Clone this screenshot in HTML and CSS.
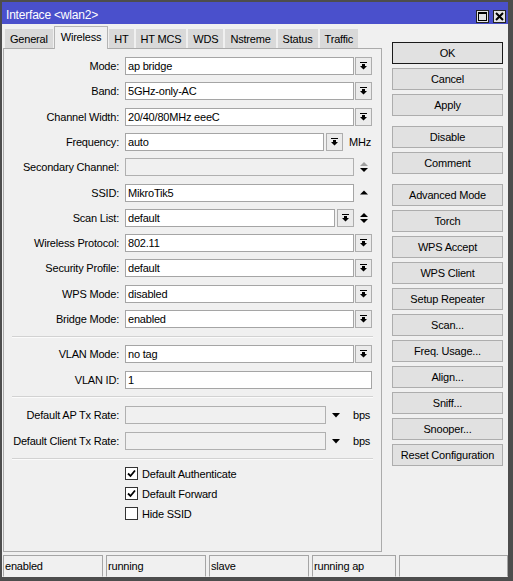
FILE: index.html
```html
<!DOCTYPE html>
<html lang="en">

<head>
    <meta charset="UTF-8">
    <title>Interface &lt;wlan2&gt;</title>
    <link rel="stylesheet" href="styles.css">
</head>

<body>
    <div class="window">
        <div class="titlebar">
            <span class="title">Interface &lt;wlan2&gt;</span>
            <div class="title-btns">
                <span class="tbtn">
                    <svg width="9" height="9" viewBox="0 0 9 9"><path d="M0 0h9v9H0z M1 2v6h7V2z" fill="#000" fill-rule="evenodd"/></svg>
                </span>
                <span class="tbtn">
                    <svg width="9" height="9" viewBox="0 0 9 9"><path d="M1 1l7 7M8 1L1 8" stroke="#000" stroke-width="2"/></svg>
                </span>
            </div>
        </div>

        <div class="main">
            <div class="tabbox">
                <div class="tabs">
                    <span class="tab">General</span>
                    <span class="tab active">Wireless</span>
                    <span class="tab">HT</span>
                    <span class="tab">HT MCS</span>
                    <span class="tab">WDS</span>
                    <span class="tab">Nstreme</span>
                    <span class="tab">Status</span>
                    <span class="tab">Traffic</span>
                </div>
                <div class="panel">
                    <div class="row">
                        <span class="label">Mode:</span>
                        <div class="field"><span class="input">ap bridge</span><span class="drop"><svg width="7" height="8" viewBox="0 0 7 8"><path d="M0 0h7v1H0z M2 2h3v2h2L3.5 7.5 0 4h2z"/></svg></span></div>
                    </div>
                    <div class="row">
                        <span class="label">Band:</span>
                        <div class="field"><span class="input">5GHz-only-AC</span><span class="drop"><svg width="7" height="8" viewBox="0 0 7 8"><path d="M0 0h7v1H0z M2 2h3v2h2L3.5 7.5 0 4h2z"/></svg></span></div>
                    </div>
                    <div class="row">
                        <span class="label">Channel Width:</span>
                        <div class="field"><span class="input">20/40/80MHz eeeC</span><span class="drop"><svg width="7" height="8" viewBox="0 0 7 8"><path d="M0 0h7v1H0z M2 2h3v2h2L3.5 7.5 0 4h2z"/></svg></span></div>
                    </div>
                    <div class="row">
                        <span class="label">Frequency:</span>
                        <div class="field"><span class="input">auto</span><span class="drop gap2"><svg width="7" height="8" viewBox="0 0 7 8"><path d="M0 0h7v1H0z M2 2h3v2h2L3.5 7.5 0 4h2z"/></svg></span><span class="unit">MHz</span></div>
                    </div>
                    <div class="row">
                        <span class="label">Secondary Channel:</span>
                        <div class="field"><span class="input off"></span>
                            <span class="spin"><svg width="8" height="10" viewBox="0 0 8 10"><path d="M0 4L4 0 8 4z" fill="#a0a0a0"/><path d="M0 6h8L4 10z"/></svg></span>
                        </div>
                    </div>
                    <div class="row">
                        <span class="label">SSID:</span>
                        <div class="field"><span class="input">MikroTik5</span>
                            <span class="spin"><svg width="8" height="10" viewBox="0 0 8 10"><path d="M0 6.5L4 2.5 8 6.5z"/></svg></span>
                        </div>
                    </div>
                    <div class="row">
                        <span class="label">Scan List:</span>
                        <div class="field"><span class="input">default</span><span class="drop gap2"><svg width="7" height="8" viewBox="0 0 7 8"><path d="M0 0h7v1H0z M2 2h3v2h2L3.5 7.5 0 4h2z"/></svg></span>
                            <span class="spin"><svg width="8" height="10" viewBox="0 0 8 10"><path d="M0 4L4 0 8 4z"/><path d="M0 6h8L4 10z"/></svg></span>
                        </div>
                    </div>
                    <div class="row">
                        <span class="label">Wireless Protocol:</span>
                        <div class="field"><span class="input">802.11</span><span class="drop"><svg width="7" height="8" viewBox="0 0 7 8"><path d="M0 0h7v1H0z M2 2h3v2h2L3.5 7.5 0 4h2z"/></svg></span></div>
                    </div>
                    <div class="row">
                        <span class="label">Security Profile:</span>
                        <div class="field"><span class="input">default</span><span class="drop"><svg width="7" height="8" viewBox="0 0 7 8"><path d="M0 0h7v1H0z M2 2h3v2h2L3.5 7.5 0 4h2z"/></svg></span></div>
                    </div>
                    <div class="row">
                        <span class="label">WPS Mode:</span>
                        <div class="field"><span class="input">disabled</span><span class="drop"><svg width="7" height="8" viewBox="0 0 7 8"><path d="M0 0h7v1H0z M2 2h3v2h2L3.5 7.5 0 4h2z"/></svg></span></div>
                    </div>
                    <div class="row">
                        <span class="label">Bridge Mode:</span>
                        <div class="field"><span class="input">enabled</span><span class="drop"><svg width="7" height="8" viewBox="0 0 7 8"><path d="M0 0h7v1H0z M2 2h3v2h2L3.5 7.5 0 4h2z"/></svg></span></div>
                    </div>

                    <div class="sep"></div>

                    <div class="row">
                        <span class="label">VLAN Mode:</span>
                        <div class="field"><span class="input">no tag</span><span class="drop"><svg width="7" height="8" viewBox="0 0 7 8"><path d="M0 0h7v1H0z M2 2h3v2h2L3.5 7.5 0 4h2z"/></svg></span></div>
                    </div>
                    <div class="row">
                        <span class="label">VLAN ID:</span>
                        <div class="field"><span class="input">1</span></div>
                    </div>

                    <div class="sep"></div>

                    <div class="row tall">
                        <span class="label">Default AP Tx Rate:</span>
                        <div class="field rate"><span class="input off"></span>
                            <svg class="tri" width="8" height="5" viewBox="0 0 8 5"><path d="M0 0h8L4 4.5z"/></svg>
                            <span class="bps">bps</span>
                        </div>
                    </div>
                    <div class="row tall">
                        <span class="label">Default Client Tx Rate:</span>
                        <div class="field rate"><span class="input off"></span>
                            <svg class="tri" width="8" height="5" viewBox="0 0 8 5"><path d="M0 0h8L4 4.5z"/></svg>
                            <span class="bps">bps</span>
                        </div>
                    </div>

                    <div class="sep tight"></div>

                    <div class="check-row">
                        <span class="box"><svg width="9" height="9" viewBox="0 0 9 9"><path d="M1 4.5l2.5 2.5L8 1.5" fill="none" stroke="#000" stroke-width="1.8"/></svg></span>
                        Default Authenticate
                    </div>
                    <div class="check-row">
                        <span class="box"><svg width="9" height="9" viewBox="0 0 9 9"><path d="M1 4.5l2.5 2.5L8 1.5" fill="none" stroke="#000" stroke-width="1.8"/></svg></span>
                        Default Forward
                    </div>
                    <div class="check-row">
                        <span class="box"></span>
                        Hide SSID
                    </div>
                </div>
            </div>

            <div class="buttons">
                <span class="btn default">OK</span>
                <span class="btn">Cancel</span>
                <span class="btn">Apply</span>
                <span class="btn group">Disable</span>
                <span class="btn">Comment</span>
                <span class="btn group">Advanced Mode</span>
                <span class="btn">Torch</span>
                <span class="btn">WPS Accept</span>
                <span class="btn">WPS Client</span>
                <span class="btn">Setup Repeater</span>
                <span class="btn">Scan...</span>
                <span class="btn">Freq. Usage...</span>
                <span class="btn">Align...</span>
                <span class="btn">Sniff...</span>
                <span class="btn">Snooper...</span>
                <span class="btn">Reset Configuration</span>
            </div>
        </div>

        <div class="status">
            <span class="cell">enabled</span>
            <span class="cell">running</span>
            <span class="cell">slave</span>
            <span class="cell short">running ap</span>
            <span class="cell last"></span>
        </div>
    </div>
</body>

</html>
```

FILE: styles.css
```css
* {
    margin: 0;
    padding: 0;
    box-sizing: border-box;
}

body {
    font: 11px "Liberation Sans", Arial, sans-serif;
    letter-spacing: -0.2px;
    color: #000;
    background-color: #f0f0f0;
}

.window {
    width: 513px;
    height: 581px;
    display: flex;
    flex-direction: column;
    border-style: solid;
    border-color: #4d4d4d;
    border-width: 2px 5px 4px 2px;
    background-color: #f0f0f0;
}

/* title bar */
.titlebar {
    height: 22px;
    flex: none;
    display: flex;
    align-items: center;
    padding-left: 4px;
    background-color: #4a50cc;
    color: #fff;
}

.title {
    font-size: 12px;
    margin-top: 4px;
}

.title-btns {
    margin-left: auto;
    margin-right: 2px;
    margin-top: 6px;
    display: flex;
    gap: 4px;
}

.tbtn {
    width: 13px;
    height: 13px;
    border: 1px solid #222;
    background-color: #e3e3e3;
    display: flex;
    align-items: center;
    justify-content: center;
}

/* main area */
.main {
    flex: 1;
    display: flex;
    padding: 2px 0 3px 1px;
}

.tabbox {
    width: 379px;
    display: flex;
    flex-direction: column;
}

.tabs {
    height: 23px;
    margin-bottom: -1px;
    padding-left: 2px;
    display: flex;
    align-items: flex-start;
    gap: 2px;
}

.tab {
    height: 19px;
    margin-top: 3px;
    padding: 0 5px;
    line-height: 20px;
    background-color: #d9d9d9;
}

.tab.active {
    position: relative;
    z-index: 1;
    height: 23px;
    margin: 0 -1px;
    padding: 0 6px;
    line-height: 20px;
    background-color: #f0f0f0;
    border: 1px solid #b4b4b4;
    border-bottom: none;
}

.panel {
    flex: 1;
    border: 1px solid #ababab;
    padding-top: 4.4px;
    background-color: #f0f0f0;
}

.row {
    height: 25.3px;
    display: flex;
    align-items: center;
}

.row.tall {
    height: 26px;
}

.label {
    width: 115px;
    margin-right: 6px;
    text-align: right;
    white-space: nowrap;
}

.field {
    width: 247px;
    height: 18px;
    display: flex;
    align-items: center;
}

.input {
    flex: 1;
    height: 18px;
    padding: 0 2px;
    line-height: 16px;
    border: 1px solid #a5a5a5;
    background-color: #fff;
    white-space: nowrap;
}

.input.off {
    background-color: #f0f0f0;
    border-color: #b0b0b0;
}

.drop {
    width: 17px;
    height: 18px;
    margin-left: 1px;
    flex: none;
    display: flex;
    align-items: center;
    justify-content: center;
    border: 1px solid #adadad;
    background-color: #ebebeb;
}

.drop.gap2 {
    margin-left: 2px;
}

.unit {
    width: 29px;
    flex: none;
    padding-left: 6px;
}

.spin {
    width: 18px;
    flex: none;
    display: flex;
    justify-content: center;
    padding-left: 2px;
}

.rate .input {
    flex: 0 0 201px;
}

.rate .tri {
    margin-left: 6px;
}

.rate .bps {
    margin-left: 13px;
}

.sep {
    margin: 4px 8px 4px;
    border-top: 1px solid #d2d2d2;
    border-bottom: 1px solid #fbfbfb;
}

.sep.tight {
    margin: 4px 8px 3.6px;
}

.check-row {
    height: 20px;
    display: flex;
    align-items: center;
    padding-left: 121px;
}

.box {
    width: 13px;
    height: 13px;
    margin-right: 4px;
    border: 1px solid #333;
    background-color: #fff;
    display: flex;
    align-items: center;
    justify-content: center;
}

/* right column buttons */
.buttons {
    width: 111px;
    margin-left: 10px;
    margin-top: 16px;
    display: flex;
    flex-direction: column;
    gap: 4px;
}

.btn {
    height: 22px;
    line-height: 20px;
    text-align: center;
    border: 1px solid #adadad;
    background-color: #e1e1e1;
}

.btn.default {
    border-color: #1a1a1a;
}

.btn.group {
    margin-top: 6px;
}

/* status bar */
.status {
    height: 22px;
    flex: none;
    display: flex;
    gap: 3px;
    padding-left: 1px;
}

.cell {
    width: 100px;
    padding-left: 1px;
    line-height: 20px;
    border: 1px solid #a5a5a5;
    border-bottom-color: #f0f0f0;
}

.cell.short {
    width: 84px;
}

.cell.last {
    flex: 1;
}
```
